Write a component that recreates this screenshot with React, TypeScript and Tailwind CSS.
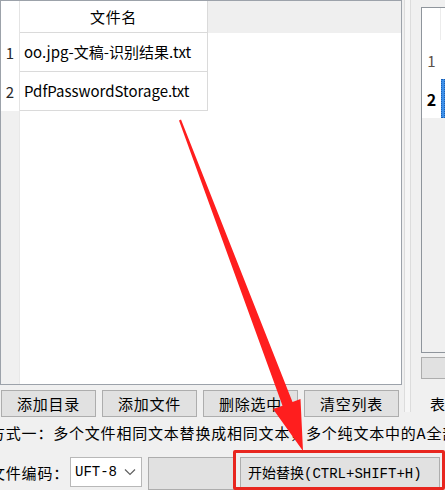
import React from 'react';

const rows = ['oo.jpg-文稿-识别结果.txt', 'PdfPasswordStorage.txt'];
const buttons = ['添加目录', '添加文件', '删除选中', '清空列表'];

function FileGrid() {
  return (
    <div className="flex h-[385px] w-[402px] flex-col border border-[#9ca2aa] bg-white">
      {/* header */}
      <div className="flex h-[32px]">
        <div className="w-[19px] border-r border-[#e4e4e4] bg-white" />
        <div className="flex w-[188px] items-center justify-center border-r border-b border-[#dadada] tracking-[0.7px]">
          文件名
        </div>
        <div className="flex-1 bg-[#efefef]" />
      </div>
      {rows.map((name, i) => (
        <div key={name} className="flex h-[39px]">
          <div className="flex w-[19px] items-center justify-center border-r border-[#e4e4e4] text-[#2a2a2a]">
            {i + 1}
          </div>
          <div className="flex w-[188px] items-center whitespace-nowrap border-r border-b border-[#dadada] pl-[4px]">
            {name}
          </div>
          <div className="flex-1" />
        </div>
      ))}
      <div className="flex flex-1">
        <div className="w-[19px] border-r border-[#e8e8e8] bg-[#f0f0f0]" />
        <div className="flex-1 bg-white" />
      </div>
    </div>
  );
}

function SideGrid() {
  return (
    <div className="flex h-[346px] flex-col border-y border-l border-[#8f959c] bg-[#f0f0f0]">
      <div className="flex h-[32px] bg-white">
        <div className="w-[19px] border-r border-[#ececec]" />
        <div className="flex-1" />
      </div>
      <div className="flex h-[39px] bg-white">
        <div className="flex w-[19px] items-center justify-center pt-[2px] text-[#5a5048]">1</div>
        <div className="flex-1" />
      </div>
      <div className="flex h-[39px] bg-white">
        <div className="flex w-[19px] items-center justify-center text-[16px] font-bold">2</div>
        <div className="flex-1 border border-dotted border-[#1a5fb4] bg-[#3d8fe8]" />
      </div>
      <div className="flex-1" />
    </div>
  );
}

export default function App() {
  return (
    <div className="relative h-[490px] w-[445px] overflow-hidden bg-[#f0f0f0] font-['Noto_Sans_CJK_SC',sans-serif] text-[15px] leading-[20px] text-black">
      <div className="flex h-[421px]">
        <div className="flex w-[402px] flex-col">
          <FileGrid />
          <div className="mt-[5px] flex gap-[6px] pl-px">
            {buttons.map((b) => (
              <div
                key={b}
                className="flex h-[27px] w-[95px] items-center justify-center border border-[#adadad] bg-[#e1e1e1] tracking-[0.7px]"
              >
                {b}
              </div>
            ))}
          </div>
        </div>

        {/* splitter */}
        <div className="w-[19px] pl-[2px]">
          <div className="h-[412px] w-[7px] border-x border-[#dcdcdc] bg-[#f6f6f6]" />
        </div>

        <div className="flex flex-1 flex-col pt-[7px]">
          <SideGrid />
          <div className="mt-[4px] h-[22px] border-y border-l border-[#adadad] bg-[#e1e1e1]" />
          <div className="mt-[15px] pl-[9px]">表</div>
        </div>
      </div>

      <div className="-ml-[10px] h-[24px] whitespace-nowrap leading-[24px] tracking-[0.8px]">
        方式一：多个文件相同文本替换成相同文本，多个纯文本中的A全部替换成B
      </div>

      <div className="flex h-[45px] items-start pt-[12px]">
        <div className="-ml-[10px] w-[80px] whitespace-nowrap pt-[6px] tracking-[0.8px]">文件编码：</div>
        <div className="flex h-[30px] w-[72px] items-center justify-between border border-[#b8b8b8] bg-white pl-[4px] pr-[5px] font-['Liberation_Mono',monospace] text-[14px]">
          <span>UFT-8</span>
          <svg width="12" height="8" viewBox="0 0 12 8" fill="none" stroke="#606060" strokeWidth="1.2">
            <path d="M1 1.5 L6 6.5 L11 1.5" />
          </svg>
        </div>
        <div className="ml-[6px] h-[33px] w-[88px] border border-[#adadad] bg-[#e1e1e1]" />
        <div className="ml-[4px] flex h-[33px] w-[200px] items-center whitespace-nowrap border border-[#adadad] bg-[#e1e1e1] pl-[7px] font-['Liberation_Mono','Noto_Sans_CJK_SC',monospace] text-[14px]">
          开始替换(CTRL+SHIFT+H)
        </div>
      </div>

      {/* annotation: red box + arrow */}
      <div className="pointer-events-none absolute left-[233px] top-[450px] h-[40px] w-[212px] rounded-[2px] border-[3px] border-[#e8261f]" />
      <svg className="pointer-events-none absolute left-0 top-0" width="445" height="490" viewBox="0 0 445 490">
        <polygon
          fill="#ff1e1e"
          points="179,120.4 181,119.6 292.5,402 300.5,399 303,451 273,409 282.5,405.8"
        />
      </svg>
    </div>
  );
}
